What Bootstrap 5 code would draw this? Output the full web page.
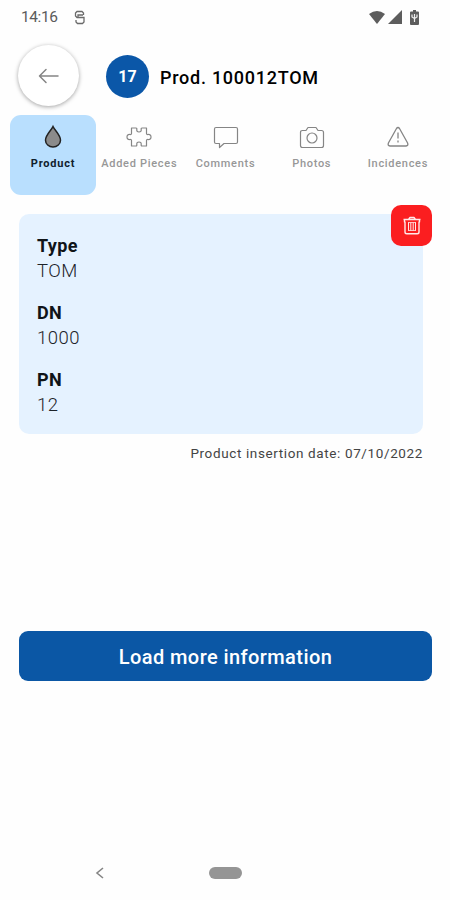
<!DOCTYPE html>
<html lang="en">
<head>
<meta charset="utf-8">
<meta name="viewport" content="width=device-width, initial-scale=1">
<title>Prod. 100012TOM</title>
<link href="https://cdn.jsdelivr.net/npm/bootstrap@5.3.0/dist/css/bootstrap.min.css" rel="stylesheet">
<style>
  body { font-family: Roboto, sans-serif; background: #fefefe; color: #111; }
  svg { display: block; flex: none; }
  .screen { width: 450px; height: 900px; overflow: hidden; }
  .status { height: 34px; padding: 0 31px 0 21px; color: #5b5b5b; font-size: 15.5px; }
  .clock { width: 37px; letter-spacing: -.4px; padding-top: 1px; white-space: nowrap; }
  .radios { gap: 3px; }
  .battery { margin-left: 5px; }
  .top { height: 81px; padding: 4px 18px 0; }
  .back { width: 61px; height: 61px; background: #fff; border: 0; box-shadow: 0 1px 4px rgba(0,0,0,.36); margin-top: -2px; }
  .num { width: 43px; height: 43px; background: #0b57a8; color: #fff; font-size: 16px; font-weight: 700; margin: 0 11px 0 27px; }
  .heading { font-size: 18px; font-weight: 500; letter-spacing: .74px; line-height: 24px; margin: 0; color: #000; padding-top: 2px; }
  .tabs { padding: 0 9px 0 10px; height: 80px; }
  .tabs .nav-link { height: 80px; padding: 9px 0 0; border-radius: 11px; color: #979797; font-size: 11px; font-weight: 500; letter-spacing: .7px; line-height: 14px; white-space: nowrap; gap: 8px; }
  .tabs .nav-link.active { background: #b9dffe; color: #10202c; font-weight: 700; letter-spacing: .8px; }
  .panel { margin: 19px 27px 0 19px; height: 220px; padding: 20px 19px 19px 18px; background: #e5f2ff; border: 0; border-radius: 10px; }
  .panel dl { margin: 0; line-height: 25px; }
  .panel dt { font-size: 18px; font-weight: 700; letter-spacing: .4px; color: #101418; margin-top: -1px; }
  .panel dd { font-size: 18.5px; font-weight: 300; letter-spacing: .5px; margin: 0 0 17.5px; color: #1c2329; padding-top: .5px; }
  .trash { width: 41px; height: 41px; right: -9px; top: -9px; background: #fb1e20; border: 0; border-radius: 10px; }
  .date { margin: 9px 27px 0 0; font-size: 13.5px; line-height: 20px; letter-spacing: .62px; color: #444; }
  .more { margin: 168px 18px 0 19px; height: 50px; padding: 2px 0 0; background: #0b57a5; color: #fff; border: 0; border-radius: 9px; font-size: 20px; font-weight: 500; letter-spacing: .42px; }
  .sysnav { margin-top: auto; height: 54px; padding: 0 0 0 95px; }
  .pill { width: 33px; height: 12px; background: #959595; margin-left: 105px; }
</style>
<script src="https://cdn.jsdelivr.net/npm/bootstrap@5.3.0/dist/js/bootstrap.bundle.min.js"></script>
</head>
<body>
<div class="screen d-flex flex-column">
  <div class="status d-flex align-items-center">
    <span class="clock">14:16</span>
    <svg class="ms-3" width="11" height="15" viewBox="0 0 11 15" fill="none" stroke="#6a6a6a" stroke-width="1.300"><path d="M9.500 5V3L8 1.500H3L1.500 3v3L3 7.500h7V12l-1.500 1.500h-5L2 12v-2M4 7V5h5"/></svg>
    <div class="radios d-flex align-items-center ms-auto">
      <svg width="16" height="13" viewBox="0 0 16 13" fill="#5d5d5d"><path d="M0 3Q8-3 16 3L8 13Z"/></svg>
      <svg width="14" height="14" viewBox="0 0 14 14" fill="#5d5d5d"><path d="M14 0V14H0Z"/></svg>
      <svg class="battery" width="9" height="15" viewBox="0 0 9 15"><path fill="#5d5d5d" d="M3 0h3v1.500h2q1 0 1 1V14q0 1-1 1H1q-1 0-1-1V2.500q0-1 1-1h2Z"/><path d="M4.500 12V4M2 4.500v2.500l2.500 1.500L7 7V4.500" fill="none" stroke="#eee" stroke-width="1.200"/></svg>
    </div>
  </div>

  <header class="top d-flex align-items-center">
    <button class="back rounded-circle d-flex align-items-center justify-content-center p-0" aria-label="Back">
      <svg width="21" height="16" viewBox="0 0 21 16" fill="none" stroke="#858585" stroke-width="1.500" stroke-linecap="round" stroke-linejoin="round"><path d="M20 8H1.500M8 1.500 1.500 8 8 14.500"/></svg>
    </button>
    <span class="num rounded-circle d-flex align-items-center justify-content-center">17</span>
    <h1 class="heading">Prod. 100012TOM</h1>
  </header>

  <nav class="tabs nav nav-fill flex-nowrap row-cols-5">
    <a class="nav-link active d-flex flex-column align-items-center" href="#">
      <svg width="26" height="25" viewBox="0 0 26 25"><path d="M13 2.500C11.200 6.500 5.500 11 5.500 16.200a7.500 6.800 0 0 0 15 0C20.500 11 14.800 6.500 13 2.500Z" fill="#8b8b8b" stroke="#222" stroke-width="1.500"/></svg>
      <span>Product</span>
    </a>
    <a class="nav-link d-flex flex-column align-items-center" href="#">
      <svg width="26" height="25" viewBox="0 0 26 25" fill="none" stroke="#858585" stroke-width="1.200" stroke-linejoin="round"><path d="M5.500 4H10q1 0 .8 1.500Q10.500 8 13 8t2.200-2.500Q15 4 16 4h4.500v5.500q0 1.200 1.500 1 3-.3 3 2.500t-3 2.500q-1.500-.2-1.500 1V22H16q-1 0-.8-1.500Q15.500 18 13 18t-2.200 2.500Q11 22 10 22H5.500v-5.500q0-1.200-1.500-1-3 .3-3-2.500t3-2.500q1.500.2 1.500-1Z"/></svg>
      <span>Added Pieces</span>
    </a>
    <a class="nav-link d-flex flex-column align-items-center" href="#">
      <svg width="26" height="25" viewBox="0 0 26 25" fill="none" stroke="#858585" stroke-width="1.200" stroke-linejoin="round"><path d="M3 3.500h20q1.500 0 1.500 1.500v13q0 1.500-1.500 1.500H11L6.500 23.500v-4H3Q1.500 19.500 1.500 18V5Q1.500 3.500 3 3.500Z"/></svg>
      <span>Comments</span>
    </a>
    <a class="nav-link d-flex flex-column align-items-center" href="#">
      <svg width="26" height="25" viewBox="0 0 26 25" fill="none" stroke="#858585" stroke-width="1.200" stroke-linejoin="round"><path d="M3.500 6.500H7L9 3.500h8l2 3h3.500Q24.500 6.500 24.500 8.500v13Q24.500 23.500 22.500 23.500h-19Q1.500 23.500 1.500 21.500v-13Q1.500 6.500 3.500 6.500Z"/><circle cx="13" cy="14" r="5"/></svg>
      <span>Photos</span>
    </a>
    <a class="nav-link d-flex flex-column align-items-center" href="#">
      <svg width="26" height="25" viewBox="0 0 26 25" fill="none" stroke="#858585" stroke-width="1.300" stroke-linejoin="round"><path d="M11.500 4.500Q13 2.500 14.500 4.500L22.600 19q1 2.700-1.600 3H5q-2.600-.3-1.600-3Z"/><path d="M13 8.500v6M13 16.500v2"/></svg>
      <span>Incidences</span>
    </a>
  </nav>

  <main class="d-flex flex-column">
    <section class="panel card">
      <dl>
        <dt>Type</dt><dd>TOM</dd>
        <dt>DN</dt><dd>1000</dd>
        <dt>PN</dt><dd>12</dd>
      </dl>
      <button class="trash position-absolute d-flex align-items-center justify-content-center p-0" aria-label="Delete">
        <svg width="18" height="19" viewBox="0 0 18 19" fill="none" stroke="#ffe9e9" stroke-width="1.400" stroke-linejoin="round"><path d="M.5 3.500h17M5.500 3.500 7 1.500h4l1.500 2M1.500 3.500V6H2v10q0 1.800 1.800 1.800h10.400Q16 17.800 16 16V6h.5V3.500"/><path d="M5.500 6.500v8M7.800 6.500v8M10.200 6.500v8M12.500 6.500v8" stroke-width="1"/><path d="M5 6.500h8M5 14.500h8" stroke-width=".8"/></svg>
      </button>
    </section>
    <p class="date text-end">Product insertion date: 07/10/2022</p>
    <button class="more btn">Load more information</button>
  </main>

  <footer class="sysnav d-flex align-items-center">
    <svg width="9" height="12" viewBox="0 0 9 12" fill="none" stroke="#858585" stroke-width="1.600"><path d="M8 1 2 6l6 5"/></svg>
    <span class="pill rounded-pill"></span>
  </footer>
</div>
</body>
</html>
